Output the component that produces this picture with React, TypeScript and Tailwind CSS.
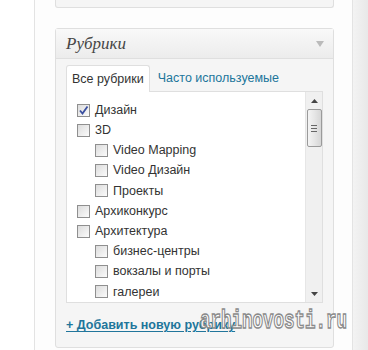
import React from "react";

type Item = { label: string; level: number; checked?: boolean };

const items: Item[] = [
  { label: "Дизайн", level: 0, checked: true },
  { label: "3D", level: 0 },
  { label: "Video Mapping", level: 1 },
  { label: "Video Дизайн", level: 1 },
  { label: "Проекты", level: 1 },
  { label: "Архиконкурс", level: 0 },
  { label: "Архитектура", level: 0 },
  { label: "бизнес-центры", level: 1 },
  { label: "вокзалы и порты", level: 1 },
  { label: "галереи", level: 1 },
];

function Checkbox({ checked }: { checked?: boolean }) {
  return (
    <span className="relative flex h-[13px] w-[13px] shrink-0 items-center justify-center border border-[#8f8f8f] bg-gradient-to-br from-[#dcdcdc] to-[#fbfbfb]">
      {checked && (
        <svg width="11" height="11" viewBox="0 0 11 11" className="absolute">
          <path d="M2 5.5 L4.5 8.5 L9.5 1.5" fill="none" stroke="#3a4fa0" strokeWidth="1.8" />
        </svg>
      )}
    </span>
  );
}

function Scrollbar() {
  return (
    <div className="flex w-[17px] shrink-0 flex-col items-center border-l border-[#e6e6e6] bg-[#f0f0f0]">
      <div className="flex h-[17px] w-full items-center justify-center">
        <svg width="7" height="4" viewBox="0 0 7 4">
          <path d="M0 4 L3.5 0 L7 4 Z" fill="#444" />
        </svg>
      </div>
      <div className="flex h-[38px] w-[15px] flex-col items-center justify-center gap-[2px] rounded-[2px] border border-[#9a9a9a] bg-gradient-to-r from-[#f4f4f4] via-[#e6e6e6] to-[#d6d6d6]">
        <span className="h-px w-[6px] bg-[#666]" />
        <span className="h-px w-[6px] bg-[#666]" />
        <span className="h-px w-[6px] bg-[#666]" />
      </div>
      <div className="flex-1" />
      <div className="flex h-[17px] w-full items-center justify-center">
        <svg width="7" height="4" viewBox="0 0 7 4">
          <path d="M0 0 L7 0 L3.5 4 Z" fill="#444" />
        </svg>
      </div>
    </div>
  );
}

export default function App() {
  return (
    <div className="relative flex h-[350px] w-[368px] overflow-hidden bg-white font-['Liberation_Sans',Arial,sans-serif] text-[12.5px] text-[#333]">
      {/* left gutter */}
      <div className="w-[35px] shrink-0 border-r border-[#e3e3e3] bg-white" />

      {/* sidebar column */}
      <div className="flex w-[317px] shrink-0 flex-col bg-[#fdfdfd] pl-[20px]">
        {/* previous box, cut at the top */}
        <div className="h-[8px] w-[279px] shrink-0 rounded-b-[3px] border-x border-b border-[#dfdfdf] bg-[#f5f5f5]" />

        {/* categories box */}
        <div className="mt-[20px] w-[279px] shrink-0 rounded-[3px] border border-[#dfdfdf] bg-[#f5f5f5]">
          <div className="flex h-[30px] items-center justify-between border-b border-[#dfdfdf] bg-gradient-to-b from-[#f9f9f9] to-[#ececec] pl-[10px] pr-[9px]">
            <span className="font-['Liberation_Serif',Georgia,serif] text-[17px] italic text-[#464646]">Рубрики</span>
            <svg width="8" height="6" viewBox="0 0 8 6">
              <path d="M0 0 L8 0 L4 6 Z" fill="#bbb" />
            </svg>
          </div>

          <div className="px-[10px] pt-[6px]">
            {/* tabs */}
            <div className="flex items-end">
              <div className="relative z-10 -mb-px flex h-[27px] items-center rounded-t-[3px] border-x border-t border-[#dfdfdf] bg-white px-[5px]">
                Все рубрики
              </div>
              <div className="flex h-[26px] items-center px-[8px] text-[#21759b]">Часто используемые</div>
            </div>

            {/* list panel */}
            <div className="flex h-[212px] border border-[#dfdfdf] bg-white">
              <div className="flex flex-1 flex-col pl-[10px] pt-[8px]">
                {items.map((it) => (
                  <label
                    key={it.label}
                    className={`flex h-[20.3px] items-center gap-[5px] ${it.level ? "pl-[18px]" : ""}`}
                  >
                    <Checkbox checked={it.checked} />
                    <span className="leading-none">{it.label}</span>
                  </label>
                ))}
              </div>
              <Scrollbar />
            </div>

            <div className="pb-[12px] pt-[13px]">
              <a className="font-bold text-[#21759b] underline underline-offset-2">+ Добавить новую рубрику</a>
            </div>
          </div>
        </div>
      </div>

      {/* right area */}
      <div className="flex-1 border-l border-[#e3e3e3] bg-gradient-to-r from-[#f3f3f3] to-[#e8e8e8]" />

      {/* watermark */}
      <div className="absolute left-[200px] top-[309px] origin-top scale-y-[1.45] font-['Liberation_Mono',monospace] text-[17.5px] font-bold leading-none text-white [-webkit-text-stroke:1px_#8a8a8a]">
        arhinovosti.ru
      </div>
    </div>
  );
}
